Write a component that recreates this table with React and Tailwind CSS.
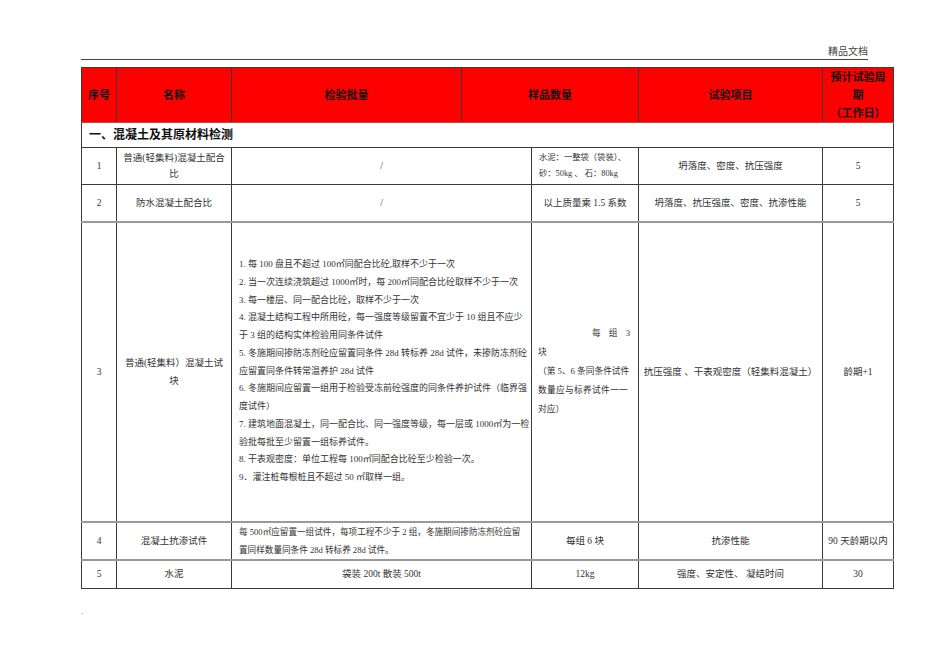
import React from "react";

const FONT = { fontFamily: "'Liberation Serif','Noto Sans CJK SC',serif" };

const B = "border border-[#3a3a3a]";

export default function App() {
  const row3Lines = [
    "1. 每 100 盘且不超过 100㎡同配合比砼,取样不少于一次",
    "2. 当一次连续浇筑超过 1000㎡时，每 200㎡同配合比砼取样不少于一次",
    "3. 每一楼层、同一配合比砼，取样不少于一次",
    "4. 混凝土结构工程中所用砼，每一强度等级留置不宜少于 10 组且不应少",
    "于 3 组的结构实体检验用同条件试件",
    "5. 冬施期间掺防冻剂砼应留置同条件 28d 转标养 28d 试件，未掺防冻剂砼",
    "应留置同条件转常温养护 28d 试件",
    "6. 冬施期间应留置一组用于检验受冻前砼强度的同条件养护试件（临界强",
    "度试件）",
    "7. 建筑地面混凝土，同一配合比、同一强度等级，每一层或 1000㎡为一检",
    "验批每批至少留置一组标养试件。",
    "8. 干表观密度：单位工程每 100㎡同配合比砼至少检验一次。",
    "9．灌注桩每根桩且不超过 50 ㎡取样一组。",
  ];

  const base = `${B} align-middle text-[#333] p-0`;
  const td = `${base} text-center text-[9.5px] leading-[16px]`;

  return (
    <div className="w-[950px] h-[672px] bg-white relative overflow-hidden" style={FONT}>
      <div className="ml-[81px] w-[787px] pt-[45px] border-b border-[#444] text-right text-[10px] leading-[14px] text-[#444]">
        精品文档
      </div>
      <table className="ml-[81px] mt-[7px] border-collapse table-fixed w-[812px]">
        <colgroup>
          <col className="w-[35px]" />
          <col className="w-[115px]" />
          <col className="w-[230px]" />
          <col className="w-[70px]" />
          <col className="w-[107px]" />
          <col className="w-[184px]" />
          <col className="w-[71px]" />
        </colgroup>
        <tbody>
          <tr className="h-[54px] bg-[#ff0000] text-[11px] font-bold text-[#111]">
            <td className={`${B} border-b-[#b05050] text-center p-0`}>序号</td>
            <td className={`${B} border-b-[#b05050] text-center p-0`}>名称</td>
            <td className={`${B} border-b-[#b05050] text-center p-0`}>检验批量</td>
            <td colSpan={2} className={`${B} border-b-[#b05050] text-center p-0`}>样品数量</td>
            <td className={`${B} border-b-[#b05050] text-center p-0`}>试验项目</td>
            <td className={`${B} border-b-[#b05050] text-center leading-[18px] p-0`}>
              预计试验周
              <br />期
              <br />（工作日）
            </td>
          </tr>
          <tr className="h-[25px]">
            <td colSpan={7} className={`${B} text-left pl-[7px] text-[12px] font-bold text-[#111]`}>
              一、混凝土及其原材料检测
            </td>
          </tr>
          <tr className="h-[37px]">
            <td className={td}>1</td>
            <td className={td}>
              普通(轻集料)混凝土配合
              <br />比
            </td>
            <td colSpan={2} className={td}>/</td>
            <td className={`${base} text-left pl-[7px] whitespace-nowrap text-[8.3px] leading-[16px]`}>
              水泥：一整袋（袋装）、
              <br />砂：50kg 、 石：80kg
            </td>
            <td className={td}>坍落度、密度、抗压强度</td>
            <td className={td}>5</td>
          </tr>
          <tr className="h-[37px] border-b-2 border-b-[#9a9a9a]">
            <td className={td}>2</td>
            <td className={td}>防水混凝土配合比</td>
            <td colSpan={2} className={td}>/</td>
            <td className={td}>以上质量乘 1.5 系数</td>
            <td className={td}>坍落度、抗压强度、密度、抗渗性能</td>
            <td className={td}>5</td>
          </tr>
          <tr className="h-[300px] border-b-2 border-b-[#9a9a9a]">
            <td className={td}>3</td>
            <td className={`${base} text-center text-[9.5px] leading-[18px]`}>
              普通(轻集料）混凝土试
              <br />块
            </td>
            <td colSpan={2} className={`${base} text-left pl-[7px] text-[9px]`}>
              <div className="leading-[17.75px] whitespace-nowrap">
                {row3Lines.map((l, i) => (
                  <div key={i}>{l}</div>
                ))}
              </div>
            </td>
            <td className={`${base} text-left pl-[6px] pr-[5px] leading-[19px] text-[8.7px]`}>
              <div className="text-right tracking-[3px]">每 组 3</div>
              <div>块</div>
              <div className="whitespace-nowrap">（第 5、6 条同条件试件</div>
              <div className="whitespace-nowrap tracking-[0.3px]">数量应与标养试件一一</div>
              <div>对应）</div>
            </td>
            <td className={td}>抗压强度 、干表观密度（轻集料混凝土）</td>
            <td className={td}>龄期+1</td>
          </tr>
          <tr className="h-[36px] border-b-2 border-b-[#9a9a9a]">
            <td className={td}>4</td>
            <td className={td}>混凝土抗渗试件</td>
            <td colSpan={2} className={`${base} text-left pl-[7px] leading-[18px] whitespace-nowrap text-[8.6px]`}>
              每 500㎡应留置一组试件，每项工程不少于 2 组，冬施期间掺防冻剂砼应留
              <br />置同样数量同条件 28d 转标养 28d 试件。
            </td>
            <td className={td}>每组 6 块</td>
            <td className={td}>抗渗性能</td>
            <td className={td}>90 天龄期以内</td>
          </tr>
          <tr className="h-[29px]">
            <td className={td}>5</td>
            <td className={td}>水泥</td>
            <td colSpan={2} className={td}>袋装 200t 散装 500t</td>
            <td className={td}>12kg</td>
            <td className={td}>强度、安定性、 凝结时间</td>
            <td className={td}>30</td>
          </tr>
        </tbody>
      </table>
      <div className="ml-[81px] mt-[17px] text-[9px] leading-[10px] text-[#555]">.</div>
    </div>
  );
}
